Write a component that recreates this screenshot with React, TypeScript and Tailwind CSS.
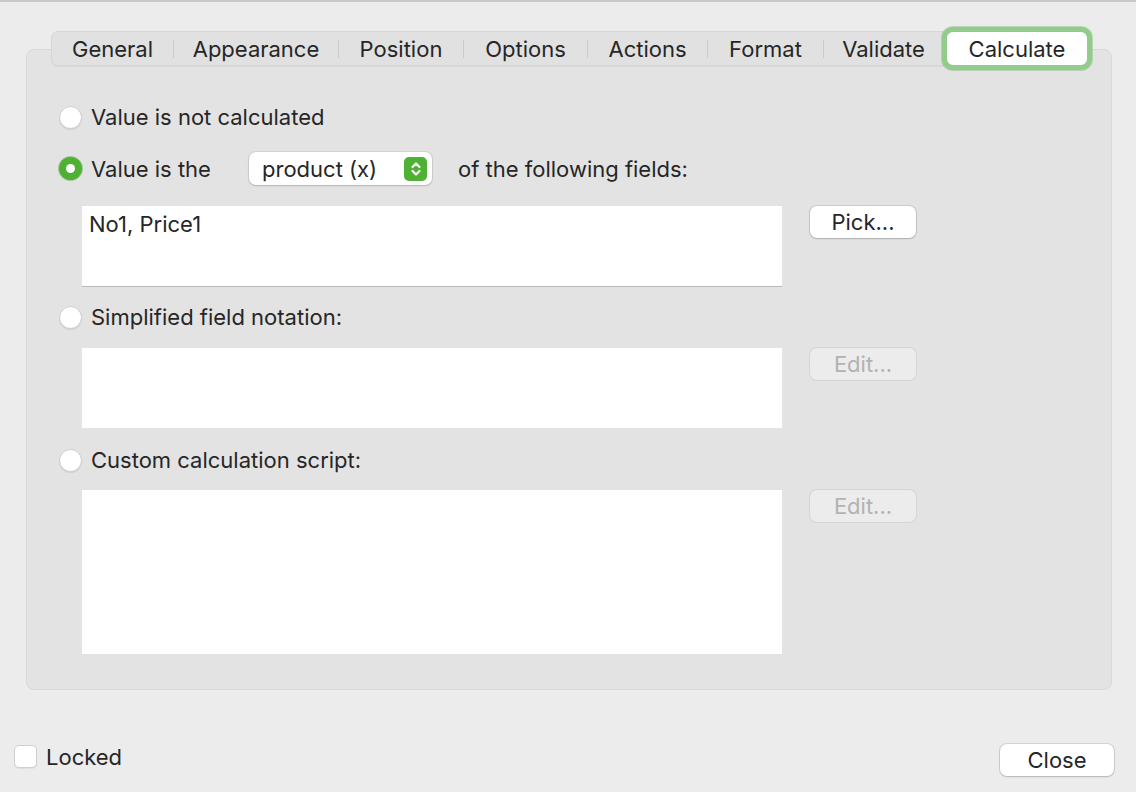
import React from "react";

const tabs: Array<{ label: string; width: number }> = [
  { label: "General", width: 122 },
  { label: "Appearance", width: 165 },
  { label: "Position", width: 125 },
  { label: "Options", width: 124 },
  { label: "Actions", width: 120 },
  { label: "Format", width: 116 },
  { label: "Validate", width: 120 },
];

const Radio = ({ checked = false }: { checked?: boolean }) =>
  checked ? (
    <span className="w-[23px] h-[23px] rounded-full bg-[#4fb133] flex items-center justify-center shrink-0 shadow-[0_0_0_1px_rgba(60,140,40,0.35)]">
      <span className="w-[9px] h-[9px] rounded-full bg-white" />
    </span>
  ) : (
    <span className="w-[23px] h-[23px] rounded-full bg-white shrink-0 border border-[#cdcdcd] shadow-[0_1px_1px_rgba(0,0,0,0.08)]" />
  );

const MacButton = ({ label, disabled = false, width }: { label: string; disabled?: boolean; width: number }) => (
  <button
    className={`h-[32px] rounded-[7px] text-[22px] leading-none flex items-center justify-center shrink-0 ${
      disabled
        ? "bg-[#ececec] text-[#b2b2b2] shadow-[0_0_0_1px_rgba(0,0,0,0.06)]"
        : "bg-white text-[#262626] shadow-[0_0_0_1px_rgba(0,0,0,0.1),0_1px_2px_rgba(0,0,0,0.15)]"
    }`}
    style={{ width }}
  >
    {label}
  </button>
);

export default function App() {
  return (
    <div
      className="w-[1136px] h-[792px] bg-[#ececec] border-t-2 border-[#c9c9c9] text-[#262626] text-[22px] leading-none flex flex-col overflow-hidden"
      style={{ fontFamily: "Inter, 'Liberation Sans', sans-serif" }}
    >
      <div className="pl-[26px] pr-[24px] pt-[25px]">
        {/* tab strip */}
        <div className="relative z-10 flex items-center ml-[25px] h-[43px]">
          <div className="flex items-center h-[35px] bg-[#e1e1e1] border border-[#d6d6d6] rounded-l-[7px] shadow-[0_1px_1px_rgba(0,0,0,0.04)]">
            {tabs.map((t, i) => (
              <div key={t.label} className="flex items-center h-full">
                <div className="flex items-center justify-center h-full pt-[1px]" style={{ width: t.width - 1 }}>
                  {t.label}
                </div>
                {i < tabs.length - 1 && <span className="w-px h-[18px] bg-[#cbcbcb]" />}
              </div>
            ))}
          </div>
          <div className="-ml-[2px] w-[150px] h-[43px] rounded-[11px] border-[5px] border-[#92cc8b] bg-white flex items-center justify-center pt-[1px] shadow-[0_0_0_1px_rgba(100,170,90,0.35)]">
            Calculate
          </div>
        </div>

        {/* panel */}
        <div className="-mt-[21px] h-[641px] bg-[#e3e3e3] border border-[#d9d9d9] rounded-[8px] pl-[32px] pt-[52px] flex flex-col">
          <div className="flex items-center gap-[9px] h-[30px]">
            <Radio />
            <span>Value is not calculated</span>
          </div>

          <div className="flex items-center h-[33px] mt-[20px]">
            <Radio checked />
            <span className="ml-[9px] w-[158px]">Value is the</span>
            <div className="w-[183px] h-[33px] bg-white rounded-[7px] shadow-[0_0_0_1px_rgba(0,0,0,0.07),0_1px_2px_rgba(0,0,0,0.15)] flex items-center pl-[13px] pr-[5px]">
              <span className="flex-1">product (x)</span>
              <span className="w-[23px] h-[24px] rounded-[5px] bg-[#4fb133] flex items-center justify-center">
                <svg width="12" height="18" viewBox="0 0 12 18" fill="none" stroke="white" strokeWidth="2.2" strokeLinecap="round" strokeLinejoin="round">
                  <path d="M2.5 7 L6 3.5 L9.5 7" />
                  <path d="M2.5 11 L6 14.5 L9.5 11" />
                </svg>
              </span>
            </div>
            <span className="ml-[26px]">of the following fields:</span>
          </div>

          <div className="flex items-start mt-[21px] ml-[23px]">
            <div className="w-[700px] h-[81px] bg-white border-b border-[#b9b9b9] px-[7px] pt-[7px]">No1, Price1</div>
            <div className="ml-[28px]">
              <MacButton label="Pick..." width={106} />
            </div>
          </div>

          <div className="flex items-center gap-[9px] h-[30px] mt-[15px]">
            <Radio />
            <span>Simplified field notation:</span>
          </div>

          <div className="flex items-start mt-[16px] ml-[23px]">
            <div className="w-[700px] h-[80px] bg-white" />
            <div className="ml-[28px]">
              <MacButton label="Edit..." width={106} disabled />
            </div>
          </div>

          <div className="flex items-center gap-[9px] h-[30px] mt-[17px]">
            <Radio />
            <span>Custom calculation script:</span>
          </div>

          <div className="flex items-start mt-[15px] ml-[23px]">
            <div className="w-[700px] h-[164px] bg-white" />
            <div className="ml-[28px]">
              <MacButton label="Edit..." width={106} disabled />
            </div>
          </div>
        </div>
      </div>

      {/* footer */}
      <div className="flex items-start justify-between pl-[14px] pr-[22px] mt-[54px]">
        <div className="flex items-center gap-[9px] mt-[1px]">
          <span className="w-[23px] h-[23px] rounded-[5px] bg-white border border-[#cfcfcf] shadow-[0_1px_1px_rgba(0,0,0,0.06)]" />
          <span>Locked</span>
        </div>
        <MacButton label="Close" width={114} />
      </div>
    </div>
  );
}
